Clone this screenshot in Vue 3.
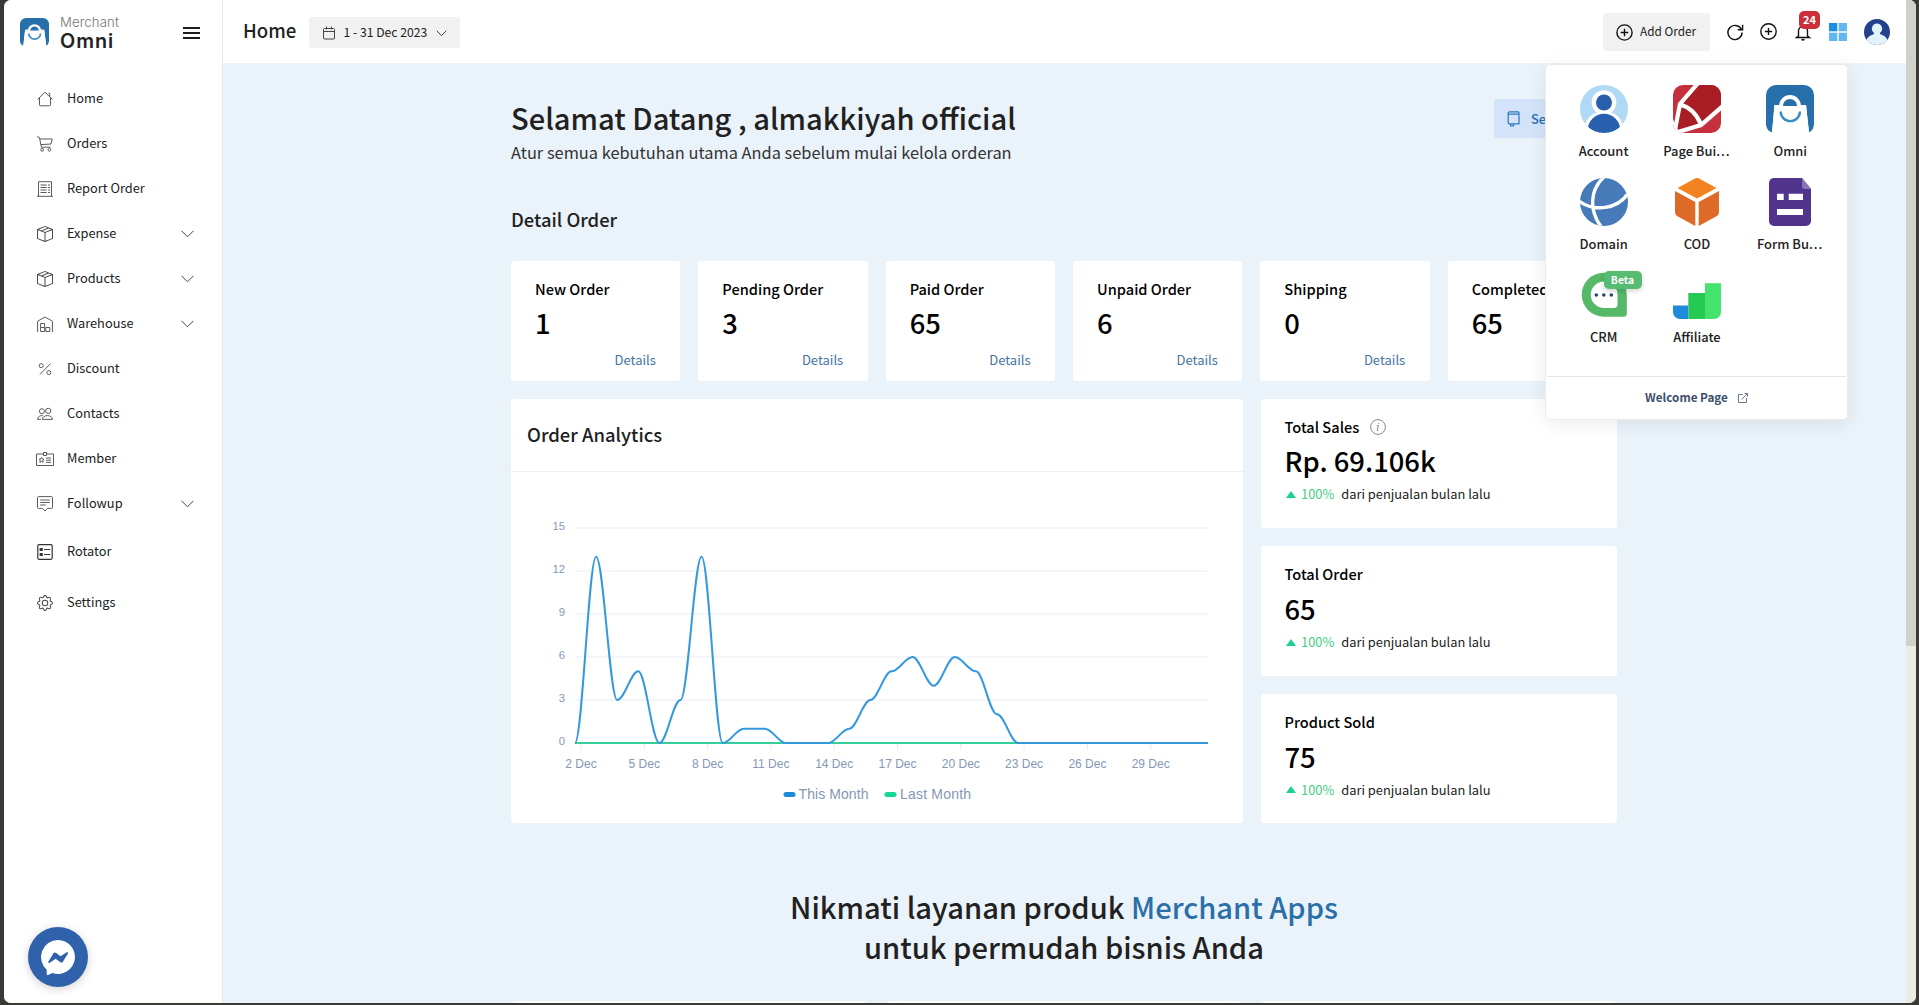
<script setup>
const boxIcon =
  'M8.186 1.113a.5.5 0 0 0-.372 0L1.846 3.5l2.404.961L10.404 2l-2.218-.887zm3.564 1.426L5.596 5 8 5.961 14.154 3.5l-2.404-.961zm3.25 1.7l-6.5 2.6v7.922l6.5-2.6V4.24zM7.5 14.762V6.838L1 4.239v7.923l6.5 2.6zM7.443.184a1.5 1.5 0 0 1 1.114 0l7.129 2.852A.5.5 0 0 1 16 3.5v8.662a1 1 0 0 1-.629.928l-7.185 2.874a.5.5 0 0 1-.372 0L.63 13.09a1 1 0 0 1-.63-.928V3.5a.5.5 0 0 1 .314-.464L7.443.184z'
const gearIcon =
  'M8 4.754a3.246 3.246 0 1 0 0 6.492 3.246 3.246 0 0 0 0-6.492zM5.754 8a2.246 2.246 0 1 1 4.492 0 2.246 2.246 0 0 1-4.492 0zM9.796 1.343c-.527-1.79-3.065-1.79-3.592 0l-.094.319a.873.873 0 0 1-1.255.52l-.292-.16c-1.64-.892-3.433.902-2.54 2.541l.159.292a.873.873 0 0 1-.52 1.255l-.319.094c-1.79.527-1.79 3.065 0 3.592l.319.094a.873.873 0 0 1 .52 1.255l-.16.292c-.892 1.64.901 3.434 2.541 2.54l.292-.159a.873.873 0 0 1 1.255.52l.094.319c.527 1.79 3.065 1.79 3.592 0l.094-.319a.873.873 0 0 1 1.255-.52l.292.16c1.64.893 3.434-.902 2.54-2.541l-.159-.292a.873.873 0 0 1 .52-1.255l.319-.094c1.79-.527 1.79-3.065 0-3.592l-.319-.094a.873.873 0 0 1-.52-1.255l.16-.292c.893-1.64-.902-3.433-2.541-2.54l-.292.159a.873.873 0 0 1-1.255-.52l-.094-.319zm-2.633.283c.246-.835 1.428-.835 1.674 0l.094.319a1.873 1.873 0 0 0 2.693 1.115l.291-.16c.764-.415 1.6.42 1.184 1.185l-.159.292a1.873 1.873 0 0 0 1.116 2.692l.318.094c.835.246.835 1.428 0 1.674l-.319.094a1.873 1.873 0 0 0-1.115 2.693l.16.291c.415.764-.42 1.6-1.185 1.184l-.291-.159a1.873 1.873 0 0 0-2.693 1.116l-.094.318c-.246.835-1.428.835-1.674 0l-.094-.319a1.873 1.873 0 0 0-2.692-1.115l-.292.16c-.764.415-1.6-.42-1.184-1.185l.159-.291A1.873 1.873 0 0 0 1.945 8.93l-.319-.094c-.835-.246-.835-1.428 0-1.674l.319-.094A1.873 1.873 0 0 0 3.06 4.377l-.16-.292c-.415-.764.42-1.6 1.185-1.184l.292.159a1.873 1.873 0 0 0 2.692-1.115l.094-.319z'

const menu = [
  { label: 'Home', line: 'M.6 8.4 8 1.2l7.4 7.2M2.5 6.8v7a1 1 0 0 0 1 1h9a1 1 0 0 0 1-1v-7M11.5 2.2h1.2v3.2' },
  { label: 'Orders', line: 'M0 1h1.8a.6.6 0 0 1 .6.5l2 9.7h9.2M2.8 3h12.4l-1.2 5-10 .6M6.5 13.8a1.4 1.4 0 1 1-2.8 0a1.4 1.4 0 1 1 2.8 0zM13.8 13.8a1.4 1.4 0 1 1-2.8 0a1.4 1.4 0 1 1 2.8 0z' },
  { label: 'Report Order', line: 'M1.5 15V.7h13V15M0 15.3h16M3.5 4h6.2M3.5 6.5h6.2M3.5 9h6.2M3.5 11.5h6.2M11 4h2M11 6.5h2M11 9h2M11 11.5h2' },
  { label: 'Expense', fill: boxIcon, arrow: true },
  { label: 'Products', fill: boxIcon, arrow: true },
  { label: 'Warehouse', line: 'M.6 16V5.2L8 1l7.4 4.2V16M3.6 7.5h4v4h-4zM3.6 11.5h4v4h-4zM8.8 11.5h4v4h-4z', arrow: true },
  { label: 'Discount', line: 'M13.5 2.6 3 13.4M6.2 4.6a2 2 0 1 1-4 0a2 2 0 1 1 4 0zM13.8 11.6a2 2 0 1 1-4 0a2 2 0 1 1 4 0z' },
  { label: 'Contacts', line: 'M7.4 5.2a2.5 2.5 0 1 1-5 0a2.5 2.5 0 1 1 5 0zM13.8 4.9a2.6 2.6 0 1 1-5.2 0a2.6 2.6 0 1 1 5.2 0zM5.4 13.4c0-2 1.8-3.8 5-3.8s5.1 1.8 5.1 3.8zM3.9 13.4H.6c0-2 1.5-3.6 3.8-3.8l1.5.1' },
  { label: 'Member', line: 'M6.5 3H-.5v11.5h17V3H9.5M6.5 1.5h3v3h-3zM4.5 6.5l.8 1.6 1.7.2-1.3 1.2.4 1.8-1.6-.9-1.6.9.4-1.8L2 8.3l1.7-.2zM9 7h5M9 9.2h5M9 11.4h5' },
  { label: 'Followup', line: 'M1.5.6h13a1 1 0 0 1 1 1v9.8a1 1 0 0 1-1 1h-3.9L8 15l-2.6-2.6H1.5a1 1 0 0 1-1-1V1.6a1 1 0 0 1 1-1zM3.2 4h9.6M3.2 6.5h9.6M3.2 9h5.6', arrow: true },
  { label: 'Rotator', line: 'M2 .7h12a1.2 1.2 0 0 1 1.2 1.2v12.2a1.2 1.2 0 0 1-1.2 1.2H2A1.2 1.2 0 0 1 .8 14.1V1.9A1.2 1.2 0 0 1 2 .7zM7 5.5h6.2M7 10.5h6.2M3.2 4.5h2v2h-2zM3.2 9.5h2v2h-2zM4.2 5v1M4.2 10v1', tall: true, dark: true },
  { label: 'Settings', fill: gearIcon, tall: true },
]

const orders = [
  { label: 'New Order', value: '1' },
  { label: 'Pending Order', value: '3' },
  { label: 'Paid Order', value: '65' },
  { label: 'Unpaid Order', value: '6' },
  { label: 'Shipping', value: '0' },
  { label: 'Completed', value: '65' },
]

const totals = [
  { label: 'Total Sales', value: 'Rp. 69.106k', info: true },
  { label: 'Total Order', value: '65' },
  { label: 'Product Sold', value: '75' },
]

const apps = [
  { name: 'Account' },
  { name: 'Page Bui', cut: true },
  { name: 'Omni' },
  { name: 'Domain' },
  { name: 'COD' },
  { name: 'Form Bu', cut: true },
  { name: 'CRM' },
  { name: 'Affiliate' },
]

// Chart geometry, in pixels of the 731x351 drawing area
const X0 = 64
const STEP = 21.1
const Y0 = 271
const UNIT = 14.33
const series = [0, 13, 3, 5, 0, 3, 13, 0, 1, 1, 0, 0, 0, 1, 3, 5, 6, 4, 6, 5, 2, 0, 0, 0, 0, 0, 0, 0, 0, 0, 0]
const px = (i) => X0 + i * STEP
const py = (v) => Y0 - v * UNIT
const curve = series.reduce((d, v, i) => {
  if (!i) return `M${px(0)} ${py(v)}`
  const k = STEP * 0.35
  return `${d}C${px(i - 1) + k} ${py(series[i - 1])} ${px(i) - k} ${py(v)} ${px(i)} ${py(v)}`
}, '')
const yTicks = [15, 12, 9, 6, 3, 0]
const xTicks = [2, 5, 8, 11, 14, 17, 20, 23, 26, 29]
</script>

<template>
  <div class="screen">
    <div class="window">
      <aside class="sidebar">
        <div class="brand">
          <svg class="brand-mark" viewBox="0 0 48 48" preserveAspectRatio="none">
            <path d="M10 0h28a10 10 0 0 1 10 10v28c0 5-2 8-4.500 9.500L40 20H8.500L5.500 47.500C2 46 0 43 0 38V10A10 10 0 0 1 10 0z" fill="#276fab" />
            <path d="M8.500 20h31.500l3.500 28h-38z" fill="#fff" />
            <path d="M15 21.500a9 9 0 0 1 18 0" fill="#276fab" stroke="#fff" stroke-width="4" />
            <path d="M14.500 26.500a9.700 9.700 0 0 0 19.500 0" fill="none" stroke="#3e8ec6" stroke-width="2.800" />
          </svg>
          <div class="brand-text">
            <span class="brand-top">Merchant</span>
            <span class="brand-name">Omni</span>
          </div>
          <div class="burger"><i></i><i></i><i></i></div>
        </div>
        <nav>
          <a v-for="m in menu" :key="m.label" class="item" :class="{ tall: m.tall }">
            <svg class="item-icon" :class="{ dark: m.dark }" viewBox="0 0 16 16">
              <path v-if="m.fill" class="solid" :d="m.fill" />
              <path v-else class="line" :d="m.line" />
            </svg>
            <span class="item-label">{{ m.label }}</span>
            <svg v-if="m.arrow" class="item-arrow" viewBox="0 0 13 8"><path d="M.5.8l6 6 6-6" /></svg>
          </a>
        </nav>
        <div class="messenger">
          <svg viewBox="0 0 60 60">
            <path d="M30 13a17 17 0 1 1-5.500 33.100L20 48a1 1 0 0 1-1.300-1v-4.300A17 17 0 0 1 30 13z" fill="#fff" />
            <path d="M20.300 34.800l5-8.200a2 2 0 0 1 3-.5l4.200 3.200 6.300-4.100a.9.9 0 0 1 1.200 1.200l-5 8a2 2 0 0 1-3 .6l-4.300-3.200-6.200 4.200a.9.9 0 0 1-1.200-1.200z" fill="#3062ab" />
          </svg>
        </div>
      </aside>

      <div class="content">
        <header class="topbar">
          <h2>Home</h2>
          <div class="date">
            <svg class="cal" viewBox="0 0 12 14"><path d="M1.500 2.500h9a1 1 0 0 1 1 1v8.500a1 1 0 0 1-1 1h-9a1 1 0 0 1-1-1V3.500a1 1 0 0 1 1-1zM.5 5.500h11M3.500.5v3M8.500.5v3" /></svg>
            <span>1 - 31 Dec 2023</span>
            <svg class="date-arrow" viewBox="0 0 11 7"><path d="M.7.7l4.800 5 4.800-5" /></svg>
          </div>
          <div class="tools">
            <div class="add">
              <svg viewBox="0 0 17 17"><circle cx="8.500" cy="8.500" r="7.600" /><path d="M8.500 4.700v7.600M4.700 8.500h7.600" /></svg>
              <span>Add Order</span>
            </div>
            <svg class="tool refresh" viewBox="0 0 16 16"><path d="M14.300 5.200A7.100 7.100 0 1 0 15.100 8.600M15.600.8v4.900h-4.900" /></svg>
            <svg class="tool" viewBox="0 0 17 17"><circle cx="8.500" cy="8.500" r="7.700" /><path d="M8.500 4.900v7.200M4.900 8.500h7.200" /></svg>
            <div class="bell">
              <svg class="tool" viewBox="0 0 18 17"><path d="M4.500 12V7a4.500 4.500 0 0 1 9 0v5l2 1.500h-13zM7.600 15.300a1.800 1.800 0 0 0 2.800 0" /></svg>
              <b>24</b>
            </div>
            <svg class="tiles" viewBox="0 0 18 18">
              <rect width="8.300" height="8.300" fill="#1b8fe0" /><rect x="9.700" width="8.300" height="8.300" fill="#64b6ee" />
              <rect y="9.700" width="8.300" height="8.300" fill="#64b6ee" /><rect x="9.700" y="9.700" width="8.300" height="8.300" fill="#64b6ee" />
            </svg>
            <div class="avatar">
              <svg viewBox="0 0 26 26"><path d="M13 4.600a5.200 5.200 0 0 1 3 9.400v1c5 1.500 7.500 4.500 8 8L13 28 2 23c.5-3.500 3-6.500 8-8v-1a5.200 5.200 0 0 1 3-9.400z" fill="#e2f3fd" /></svg>
            </div>
          </div>
        </header>

        <main>
          <div class="inner">
            <div class="welcome">
              <div>
                <h1>Selamat Datang , almakkiyah official</h1>
                <p>Atur semua kebutuhan utama Anda sebelum mulai kelola orderan</p>
              </div>
              <div class="setup">
                <svg viewBox="0 0 13 16"><path d="M2 .8h9a1 1 0 0 1 1 1v11H2.500a1.300 1.300 0 0 1-1.300-1.300V1.800a1 1 0 0 1 1-1zM1 3.200h11M3.500 13v2h3v-2" /></svg>
                <span>Se</span>
              </div>
            </div>

            <h3>Detail Order</h3>
            <section class="orders">
              <article v-for="o in orders" :key="o.label" class="card order">
                <span class="label">{{ o.label }}</span>
                <strong>{{ o.value }}</strong>
                <a>Details</a>
              </article>
            </section>

            <section class="stats">
              <article class="card analytics">
                <div class="analytics-head">Order Analytics</div>
                <svg class="chart" width="731" height="351" viewBox="0 0 731 351">
                  <g v-for="t in yTicks" :key="t">
                    <line class="grid" :x1="X0" :x2="X0 + 30 * STEP" :y1="py(t)" :y2="py(t)" />
                    <text class="ytick" x="54" :y="py(t) + 2">{{ t }}</text>
                  </g>
                  <g v-for="(t, i) in xTicks" :key="t">
                    <line class="tick" :x1="70 + i * 63.3" :x2="70 + i * 63.3" y1="272" y2="278" />
                    <text class="xtick" :x="70 + i * 63.3" y="296">{{ t }} Dec</text>
                  </g>
                  <line class="last" :x1="X0" :x2="X0 + 30 * STEP" :y1="Y0" :y2="Y0" />
                  <path class="this" :d="curve" />
                  <rect x="272.500" y="320" width="12" height="5" rx="2.500" fill="#1c8ad9" />
                  <text class="legend" x="287.500" y="327.300" textLength="70">This Month</text>
                  <rect x="373.500" y="320" width="12" height="5" rx="2.500" fill="#15d694" />
                  <text class="legend" x="389" y="327.300" textLength="71">Last Month</text>
                </svg>
              </article>
              <div class="totals">
                <article v-for="t in totals" :key="t.label" class="card total">
                  <span class="label">
                    {{ t.label }}
                    <svg v-if="t.info" viewBox="0 0 16 16">
                      <circle cx="8" cy="8" r="7.400" /><path d="M6.800 6.800l1.600-.3-1.200 5 1.200-.1M8.600 4v1" />
                    </svg>
                  </span>
                  <strong>{{ t.value }}</strong>
                  <span class="trend"><i></i><em>100%</em>dari penjualan bulan lalu</span>
                </article>
              </div>
            </section>

            <div class="promo">
              Nikmati layanan produk <span>Merchant Apps</span><br />untuk permudah bisnis Anda
            </div>
            <section class="products">
              <div class="card"></div>
              <div class="card"></div>
              <div class="card"></div>
            </section>
          </div>
        </main>
      </div>

      <div class="scrollbar"><div class="thumb"></div></div>

      <div class="launcher">
        <div class="apps">
          <div v-for="a in apps" :key="a.name" class="app">
            <svg v-if="a.name === 'Account'" viewBox="0 0 48 48">
              <defs><clipPath id="acc"><circle cx="24" cy="24" r="24" /></clipPath></defs>
              <g clip-path="url(#acc)">
                <rect width="48" height="48" fill="#b0d9f5" />
                <circle cx="24" cy="46" r="20" fill="#fff" />
                <circle cx="24" cy="17.500" r="12.300" fill="#fff" />
                <circle cx="24" cy="45" r="16.200" fill="#2860ae" />
                <circle cx="24" cy="17.500" r="8" fill="#2860ae" />
              </g>
            </svg>
            <svg v-else-if="a.name === 'Page Bui'" viewBox="0 0 48 48">
              <defs><clipPath id="pb"><rect width="48" height="48" rx="10" /></clipPath></defs>
              <g clip-path="url(#pb)">
                <rect width="48" height="48" fill="#c5303d" />
                <path d="M26 0h22v21L28 40 5 45 7 19z" fill="#a81e24" />
                <path d="M26-3 7 19 1 50M7 19.500C17 22 24 30 28 39.500M51 20 28 40 5 47" fill="none" stroke="#fff" stroke-width="4.200" />
                <path d="M0 34v14h10l-7-5z" fill="#fff" />
              </g>
            </svg>
            <svg v-else-if="a.name === 'Omni'" viewBox="0 0 48 48">
              <path d="M10 0h28a10 10 0 0 1 10 10v28c0 5-2 8-5 9.500L40 20H8.500L6 47.500C2 46 0 43 0 38V10A10 10 0 0 1 10 0z" fill="#276fab" />
              <path d="M8.500 20h31.500l3 28h-37z" fill="#fff" />
              <path d="M15 21a9 9 0 0 1 18 0z" fill="#276fab" />
              <path d="M15 21a9 9 0 0 1 18 0" fill="none" stroke="#fff" stroke-width="3.800" />
              <path d="M14.700 26.500a9.600 9.600 0 0 0 19.200 0" fill="none" stroke="#3a8cc2" stroke-width="2.400" />
            </svg>
            <svg v-else-if="a.name === 'Domain'" viewBox="0 0 48 48">
              <defs><clipPath id="dom"><circle cx="24" cy="24" r="24" /></clipPath></defs>
              <g clip-path="url(#dom)">
                <rect width="48" height="48" fill="#467ab8" />
                <path d="M25-2C9 12 9 33 22 50M-1 23C14 34 38 32 49 14" fill="none" stroke="#fff" stroke-width="3.400" />
              </g>
            </svg>
            <svg v-else-if="a.name === 'COD'" viewBox="0 0 48 48">
              <path d="M21.500.7a5 5 0 0 1 5 0L43.500 10 24 20.500 4.500 10z" fill="#f38220" />
              <path d="M2 13l20.300 11v24L4.500 38.300A5 5 0 0 1 2 34zM46 13 25.700 24v24l17.800-9.700A5 5 0 0 0 46 34z" fill="#dd6a26" />
            </svg>
            <svg v-else-if="a.name === 'Form Bu'" viewBox="0 0 48 48">
              <path d="M8 0h28l9 11v32a5 5 0 0 1-5 5H8a5 5 0 0 1-5-5V5a5 5 0 0 1 5-5z" fill="#50348e" />
              <path d="M36 0l9 11h-7a2 2 0 0 1-2-2z" fill="#8b76b5" />
              <path d="M11 15.700h6.700V22H11zM22.700 15.700H37V22H22.700zM11 31h26v6H11z" fill="#fff" />
            </svg>
            <svg v-else-if="a.name === 'CRM'" viewBox="0 0 48 48">
              <path d="M23.500 1.700h.5a22.500 22.500 0 0 1 22.800 22v19a3 3 0 0 1-3 3H24a22 22 0 0 1-.5-44z" fill="#55b967" />
              <path d="M24 10.500a13 13 0 0 1 13.500 13v10a3.500 3.500 0 0 1-3.500 3.500H24a13.200 13.200 0 0 1 0-26.500z" fill="#fff" />
              <g fill="#26476b"><circle cx="16.300" cy="24" r="1.800" /><circle cx="23.800" cy="24" r="1.800" /><circle cx="31.300" cy="24" r="1.800" /></g>
            </svg>
            <svg v-else viewBox="0 0 48 48">
              <path d="M0 34.500h15.300V48H7a7 7 0 0 1-7-7z" fill="#1f8bdc" />
              <path d="M15.300 22H32v26H15.300z" fill="#26c953" />
              <path d="M32 12.300h16V41a7 7 0 0 1-7 7h-9z" fill="#45e36e" />
            </svg>
            <b v-if="a.name === 'CRM'" class="beta">Beta</b>
            <span class="app-name">{{ a.name }}<span v-if="a.cut" class="dots">...</span></span>
          </div>
        </div>
        <div class="launcher-foot">
          <span>Welcome Page</span>
          <svg viewBox="0 0 10 10"><path d="M4.800 1.500H.5v8h8V5.200M3.500 6.500 9.500.5M6.500.5h3v3" /></svg>
        </div>
      </div>
    </div>
  </div>
</template>

<style>
body {
  margin: 0;
  background: #3a3936;
}
</style>

<style scoped>
* {
  box-sizing: border-box;
}
.screen {
  width: 1919px;
  height: 1005px;
  padding: 0 3px 2px 4px;
  background: #3a3936;
  overflow: hidden;
  font-family: 'Noto Sans CJK SC', 'Noto Sans', sans-serif;
  color: #212121;
}
.window {
  position: relative;
  display: flex;
  height: 1003px;
  border-radius: 7px;
  overflow: hidden;
  background: #eaf2fa;
}
svg {
  display: block;
  flex: none;
}

/* Sidebar */
.sidebar {
  position: relative;
  width: 219px;
  flex: none;
  background: #fff;
  border-right: 1px solid #e4e9ef;
}
.brand {
  display: flex;
  height: 75px;
  padding: 18px 0 0 16px;
}
.brand-mark {
  width: 29px;
  height: 28px;
}
.brand-text {
  display: flex;
  flex-direction: column;
  width: 119px;
  padding-left: 11px;
  margin-top: -4px;
  font-family: Inter, sans-serif;
}
.brand-top {
  font-size: 13.2px;
  line-height: 17px;
  font-weight: 300;
  letter-spacing: 0.1px;
  color: #777;
}
.brand-name {
  font-size: 19.8px;
  line-height: 20px;
  font-weight: 600;
  letter-spacing: 1px;
  color: #242122;
}
.burger {
  display: flex;
  flex-direction: column;
  gap: 3px;
  width: 17px;
  margin: 9px 0 0 15px;
}
.burger i {
  height: 2px;
  background: #1d1d1d;
}
.item {
  display: flex;
  align-items: center;
  height: 45px;
  padding: 0 28px 0 33px;
  font-size: 12.8px;
}
.item.tall {
  height: 51px;
}
.item-icon {
  width: 16px;
  height: 16px;
  margin-top: 2px;
  overflow: visible;
}
.item-icon .line {
  fill: none;
  stroke: #5a5a5a;
  stroke-width: 1;
}
.item-icon.dark .line {
  stroke: #333;
  stroke-width: 1.2;
}
.item-icon .solid {
  fill: #4a4a4a;
}
.item-label {
  flex: 1;
  margin: -1px 0 0 14px;
}
.item-arrow {
  width: 13px;
  height: 8px;
  margin-top: 2px;
}
.item-arrow path,
.date-arrow path,
.cal path {
  fill: none;
  stroke: #444;
  stroke-width: 1;
}
.messenger {
  position: absolute;
  left: 24px;
  top: 927px;
  width: 60px;
  height: 60px;
  border-radius: 50%;
  background: #3062ab;
  box-shadow: 0 2px 10px rgba(0, 0, 0, 0.18);
}

/* Top bar */
.content {
  display: flex;
  flex-direction: column;
  width: 1683px;
  flex: none;
}
.topbar {
  display: flex;
  align-items: center;
  height: 63px;
  flex: none;
  padding: 0 16px 0 20px;
  background: #fff;
}
.topbar h2 {
  width: 66px;
  margin: -4px 0 0;
  font-size: 18.6px;
  font-weight: 500;
}
.date {
  display: flex;
  align-items: center;
  width: 151px;
  height: 31px;
  margin-top: 2px;
  padding-left: 14px;
  border-radius: 3px;
  background: #f1f1f1;
  font-size: 12.2px;
}
.date span {
  width: 92px;
  margin: -1px 0 0 8.5px;
  white-space: nowrap;
}
.cal {
  width: 12px;
  height: 14px;
}
.date-arrow {
  width: 11px;
  height: 7px;
  margin-top: 2px;
}
.tools {
  display: flex;
  align-items: center;
  gap: 17px;
  margin-left: auto;
}
.add {
  display: flex;
  align-items: center;
  gap: 7px;
  width: 107px;
  height: 38px;
  margin-top: 1px;
  padding-left: 13px;
  border-radius: 3px;
  background: #f1f1f1;
  font-size: 11.8px;
  white-space: nowrap;
}
.add span {
  margin-top: -3px;
}
.add svg,
.tool {
  width: 17px;
  height: 17px;
  fill: none;
  stroke: #111;
  stroke-width: 1.4;
}
.tool.refresh {
  width: 16px;
  height: 16px;
  overflow: visible;
}
.bell {
  position: relative;
}
.bell .tool {
  width: 18px;
  margin-top: 2px;
}
.bell b {
  position: absolute;
  left: 5px;
  top: -11px;
  width: 21px;
  height: 18px;
  border-radius: 5px;
  background: #cc2f3a;
  color: #fff;
  font-size: 11px;
  line-height: 17px;
  text-align: center;
}
.tiles {
  width: 18px;
  height: 18px;
  margin-top: 1px;
}
.avatar {
  width: 26px;
  height: 26px;
  margin-top: 1px;
  border-radius: 50%;
  background: #23408a;
  overflow: hidden;
}

/* Page */
main {
  display: flex;
  justify-content: center;
  flex: 1;
  min-height: 0;
  overflow: hidden;
}
.inner {
  width: 1106px;
  padding-top: 34px;
  margin-right: 1px;
}
.welcome {
  display: flex;
  justify-content: space-between;
  align-items: flex-start;
}
h1 {
  margin: 0;
  font-size: 29.1px;
  line-height: 40px;
  font-weight: 500;
}
.welcome p {
  margin: 3px 0 0;
  font-size: 16.4px;
  line-height: 24px;
  color: #333;
}
.setup {
  display: flex;
  align-items: center;
  gap: 11px;
  width: 123px;
  height: 39px;
  margin-top: 2px;
  padding-left: 13px;
  border-radius: 3px;
  background: #d3e4fa;
  color: #2a6fb3;
  font-size: 12.8px;
  font-weight: 500;
}
.setup svg {
  width: 13px;
  height: 16px;
  fill: none;
  stroke: #2a78c0;
  stroke-width: 1.2;
}
h3 {
  margin: 41px 0 28px;
  font-size: 18.4px;
  line-height: 28px;
  font-weight: 500;
}
.card {
  border-radius: 3px;
  background: #fff;
}
.orders {
  display: grid;
  grid-template-columns: repeat(6, 1fr);
  gap: 18px;
}
.order {
  display: flex;
  flex-direction: column;
  height: 120px;
  padding: 16px 24.5px 0 24px;
}
.label {
  display: flex;
  align-items: center;
  gap: 11px;
  font-size: 14.6px;
  line-height: 24px;
  font-weight: 500;
  color: #000;
  white-space: nowrap;
}
.label svg {
  width: 16px;
  height: 16px;
  margin-top: -1px;
  fill: none;
  stroke: #888;
}
.card strong {
  font-size: 27.4px;
  line-height: 36px;
  font-weight: 500;
  color: #000;
  white-space: nowrap;
}
.order strong {
  margin-top: 3px;
}
.order a {
  margin-top: 10px;
  align-self: flex-end;
  font-size: 13px;
  line-height: 20px;
  color: #44749f;
}
.stats {
  display: flex;
  gap: 18px;
  height: 424px;
  margin-top: 18px;
}
.analytics {
  width: 731.5px;
}
.analytics-head {
  height: 73px;
  padding-left: 16px;
  border-bottom: 1px solid #eef0f2;
  font-size: 18.45px;
  line-height: 71px;
  font-weight: 500;
}
.chart text {
  font-family: 'Liberation Sans', Arial, sans-serif;
  fill: #8597b4;
}
.grid {
  stroke: #f0f3f7;
  stroke-width: 1.5;
}
.tick {
  stroke: #e8eaee;
}
.ytick {
  font-size: 11.3px;
  text-anchor: end;
}
.xtick {
  font-size: 12px;
  text-anchor: middle;
}
.legend {
  font-size: 14px;
}
.last {
  stroke: #36cf9c;
  stroke-width: 2;
}
.this {
  fill: none;
  stroke: #3498df;
  stroke-width: 2;
}
.totals {
  display: flex;
  flex: 1;
  flex-direction: column;
  gap: 18px;
}
.total {
  display: flex;
  flex: 1;
  flex-direction: column;
  padding: 16px 0 0 24px;
}
.total strong {
  margin-top: 4px;
}
.total:first-child strong {
  margin-top: 3px;
}
.trend {
  display: flex;
  align-items: center;
  margin-top: 6px;
  font-size: 12.85px;
  line-height: 20px;
}
.trend i {
  margin: 0 5px 0 1.5px;
  border: 5px solid transparent;
  border-top: 0;
  border-bottom: 7px solid #1ed08a;
}
.trend em {
  margin-right: 7px;
  font-style: normal;
  color: #3fcf7f;
}
.promo {
  margin-top: 63px;
  text-align: center;
  font-size: 29.1px;
  line-height: 40px;
  font-weight: 500;
}
.promo span {
  color: #2a6fa8;
}
.products {
  display: grid;
  grid-template-columns: repeat(3, 1fr);
  gap: 18px;
  margin-top: 35px;
}
.products .card {
  height: 60px;
  border-radius: 5px;
}

/* Scrollbar */
.scrollbar {
  width: 10px;
  flex: none;
  background: #ecebe6;
}
.thumb {
  height: 646px;
  background: #d1d0ca;
}

/* App launcher */
.launcher {
  position: absolute;
  left: 1541px;
  top: 64px;
  width: 303px;
  height: 356px;
  border: 1px solid #ebebeb;
  border-radius: 5px;
  background: #fff;
  box-shadow: 0 4px 20px rgba(0, 0, 0, 0.08);
}
.apps {
  display: grid;
  grid-template-columns: repeat(3, 93.3px);
  grid-auto-rows: 93px;
  height: 311px;
  padding: 20px 0 0 11px;
}
.app {
  position: relative;
  display: flex;
  flex-direction: column;
  align-items: center;
  font-size: 12.9px;
  line-height: 20px;
  font-weight: 500;
}
.app svg {
  width: 48px;
  height: 48px;
  margin-bottom: 8px;
}
.app-name {
  white-space: nowrap;
}
.dots {
  letter-spacing: 1px;
}
.beta {
  position: absolute;
  left: 46.5px;
  top: 0;
  width: 38px;
  height: 18px;
  border-radius: 5px;
  background: #57bb72;
  box-shadow: 0 2px 5px rgba(0, 0, 0, 0.18);
  color: #fff;
  font-size: 10.4px;
  line-height: 17.5px;
  text-align: center;
}
.launcher-foot {
  display: flex;
  align-items: center;
  justify-content: center;
  gap: 10px;
  height: 43px;
  margin: 0 1px;
  border-top: 1px solid #e4e6e8;
  color: #3d4f6d;
  font-size: 11.7px;
  font-weight: 700;
}
.launcher-foot span {
  margin-top: -3px;
}
.launcher-foot svg {
  width: 10px;
  height: 10px;
  overflow: visible;
  fill: none;
  stroke: #5a6a84;
  stroke-width: 0.9;
}
</style>
